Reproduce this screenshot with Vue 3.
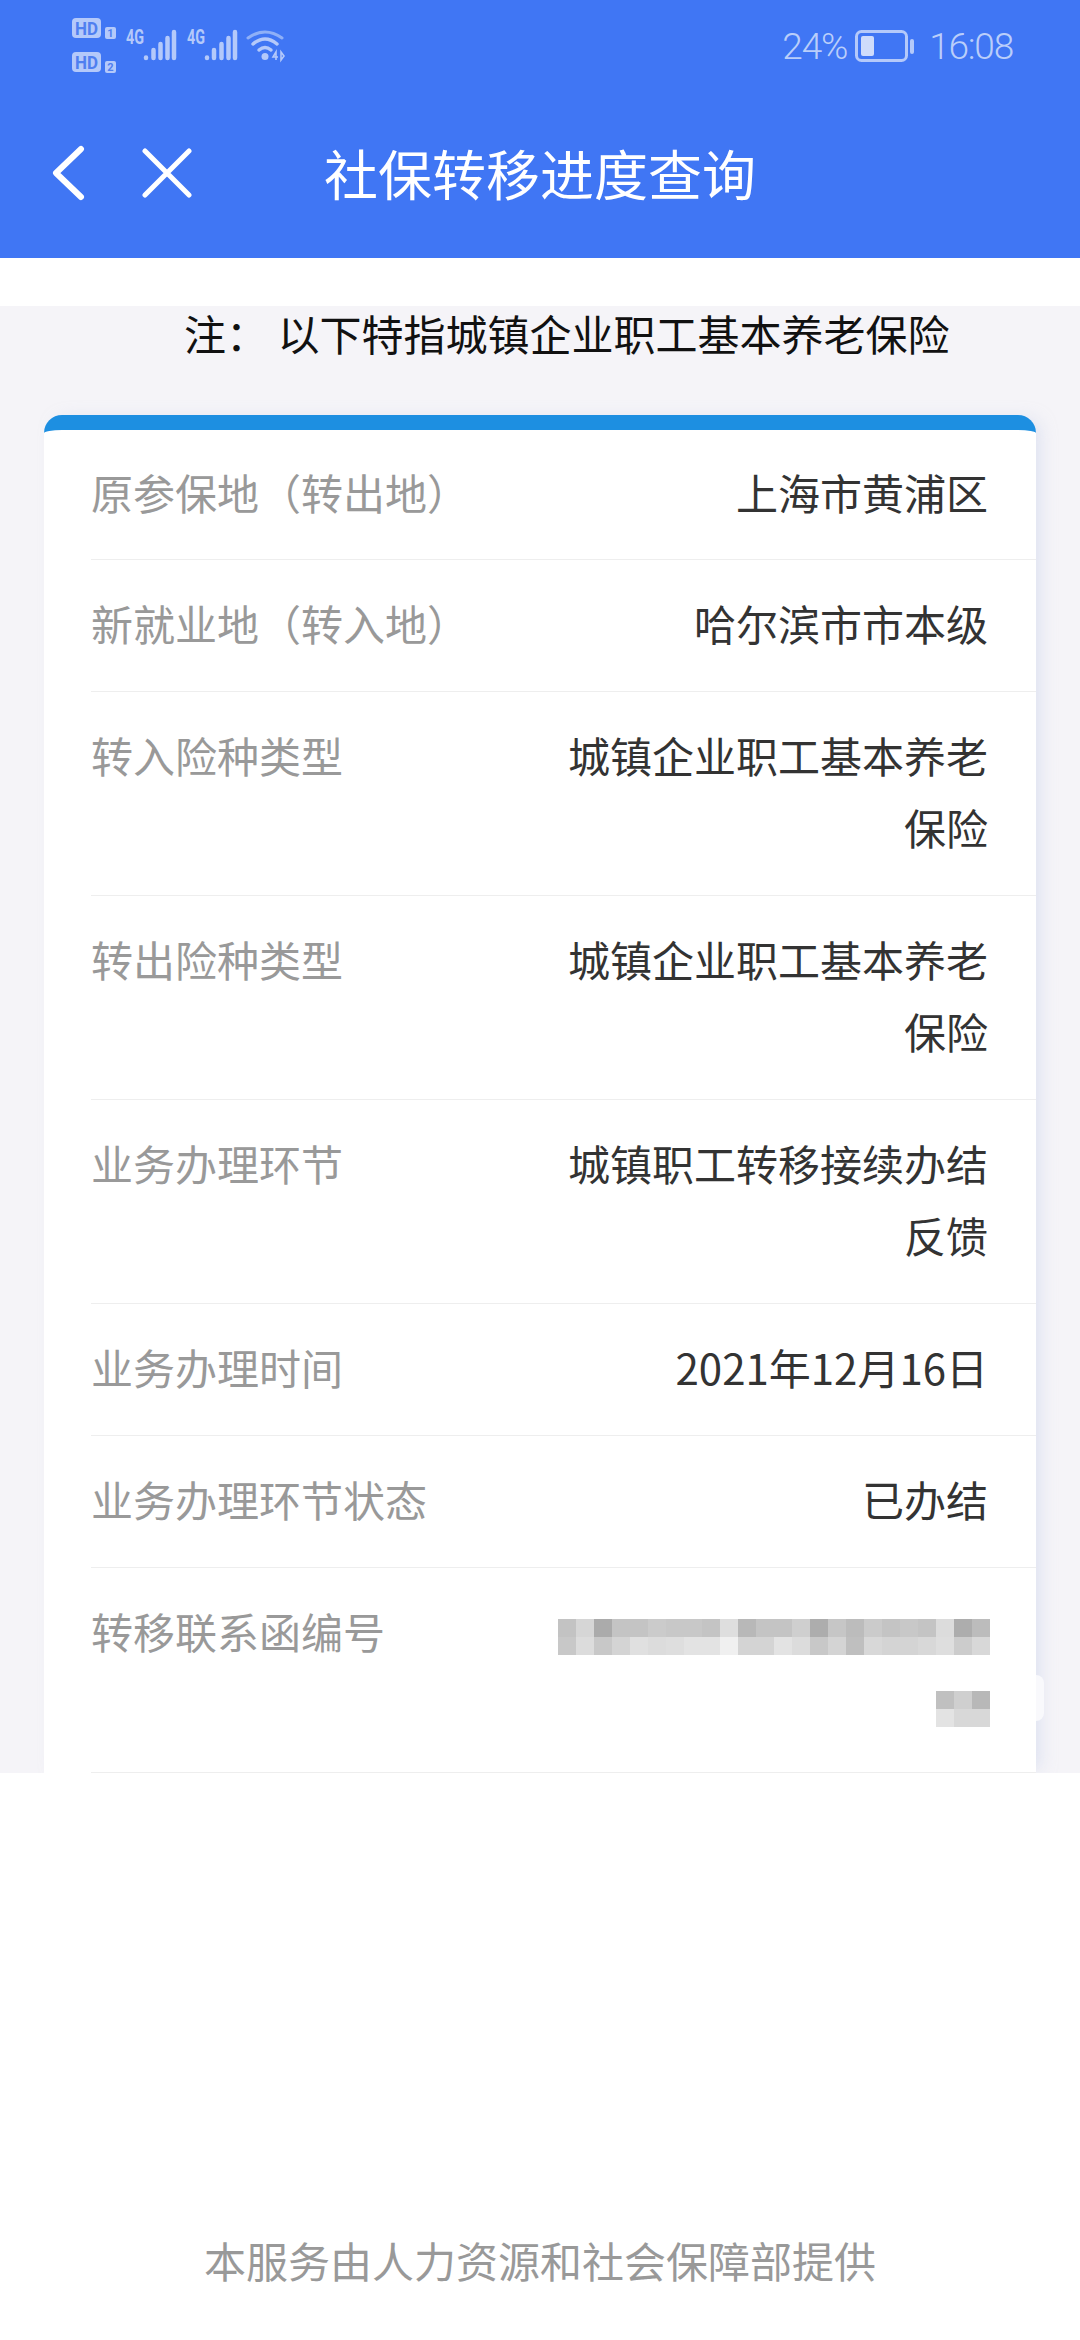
<script setup>
const rows = [
  { label: '原参保地（转出地）', value: '上海市黄浦区' },
  { label: '新就业地（转入地）', value: '哈尔滨市市本级' },
  { label: '转入险种类型', value: '城镇企业职工基本养老保险' },
  { label: '转出险种类型', value: '城镇企业职工基本养老保险' },
  { label: '业务办理环节', value: '城镇职工转移接续办结反馈' },
  { label: '业务办理时间', value: '2021年12月16日' },
  { label: '业务办理环节状态', value: '已办结' },
]
const mosaicLines = [
  [
    ['#c3c3c3','#d6d6d6','#ababab','#c4c4c4','#c4c4c4','#cbcbcb','#c8c8c8','#c8c8c8','#c4c4c4','#dedede','#b8b8b8','#c4c4c4','#c4c4c4','#cfcfcf','#adadad','#c6c6c6','#bcbcbc','#cbcbcb','#c4c4c4','#c8c8c8','#c4c4c4','#dcdcdc','#adadad','#bcbcbc'],
    ['#c8c8c8','#dcdcdc','#c8c8c8','#d4d4d4','#e0e0e0','#dcdcdc','#dedede','#e3e3e3','#e3e3e3','#f0f0f0','#d4d4d4','#d4d4d4','#e3e3e3','#dcdcdc','#c8c8c8','#d4d4d4','#bfbfbf','#d8d8d8','#d4d4d4','#d4d4d4','#d8d8d8','#dedede','#cccccc','#d8d8d8'],
  ],
  [
    ['#c0c0c0','#cfcfcf','#b8b8b8'],
    ['#e3e3e3','#d8d8d8','#d8d8d8'],
  ],
]
</script>

<template>
  <div class="page">
    <header class="header">
      <div class="status">
        <svg class="sb-icons" width="220" height="60" viewBox="0 0 220 60">
          <g fill="#b4c9fa">
            <rect x="0" y="0" width="29" height="20" rx="4" />
            <rect x="0" y="34" width="29" height="20" rx="4" />
            <rect x="33" y="9" width="11" height="12" rx="2" />
            <rect x="33" y="43" width="11" height="12" rx="2" />
          </g>
          <text x="3" y="16.5" class="hd" textLength="23" lengthAdjust="spacingAndGlyphs">HD</text>
          <text x="3" y="50.5" class="hd" textLength="23" lengthAdjust="spacingAndGlyphs">HD</text>
          <text x="38.5" y="19" class="hd-n">1</text>
          <text x="38.5" y="53" class="hd-n">2</text>
          <text x="54" y="26" class="net" textLength="18" lengthAdjust="spacingAndGlyphs">4G</text>
          <text x="115" y="26" class="net" textLength="18" lengthAdjust="spacingAndGlyphs">4G</text>
          <g stroke="#b4c9fa" stroke-width="4.5" stroke-linecap="round">
            <path d="M74 39.5v.5M81.500 32v8M88.500 26v14M95.500 20v20M102 14v26" />
            <path d="M135 39.500v.5M142 32v8M149.500 26v14M156.500 20v20M163 14v26" />
          </g>
          <g fill="none" stroke-linecap="round">
            <path d="M176 20q17-12 34 0" stroke="#8fb0f7" stroke-width="3" />
            <path d="M181 26q12-10 24 0" stroke="#b4c9fa" stroke-width="3.500" />
            <path d="M187 32q6-5 12 0" stroke="#b4c9fa" stroke-width="3.500" />
          </g>
          <circle cx="193" cy="38.500" r="3.500" fill="#b4c9fa" />
          <path d="M204 42v-8l-3 5h5M209 34v8l3-4z" fill="none" stroke="#b4c9fa" stroke-width="1.600" />
        </svg>
        <div class="status-right">
          <span class="sb-text">24%</span>
          <svg class="battery" width="60" height="32" viewBox="0 0 60 32">
            <rect x="1.500" y="1.500" width="50" height="29" rx="5" fill="none" stroke="#b4c9fa" stroke-width="3" />
            <rect x="6" y="6" width="13" height="20" rx="2" fill="#cfdcfb" />
            <rect x="55" y="9" width="4" height="15" rx="2" fill="#b4c9fa" />
          </svg>
          <span class="sb-text time">16:08</span>
        </div>
      </div>
      <nav class="nav">
        <div class="nav-icons">
          <svg width="34" height="56" viewBox="0 0 34 56">
            <path d="M29 4 4 28l25 24" fill="none" stroke="#fff" stroke-width="6" stroke-linecap="round" stroke-linejoin="round" />
          </svg>
          <svg width="50" height="50" viewBox="0 0 50 50">
            <path d="M3 3l44 44M47 3 3 47" fill="none" stroke="#fff" stroke-width="5" stroke-linecap="round" />
          </svg>
        </div>
        <h1 class="title">社保转移进度查询</h1>
      </nav>
    </header>

    <div class="gap"></div>

    <main class="content">
      <p class="note">注：&nbsp;以下特指城镇企业职工基本养老保险</p>
      <section class="card">
        <div v-for="row in rows" :key="row.label" class="row">
          <span class="label">{{ row.label }}</span>
          <span class="value">{{ row.value }}</span>
        </div>
        <div class="row row-last">
          <span class="label">转移联系函编号</span>
          <div class="mosaic">
            <div v-for="(line, i) in mosaicLines" :key="i" class="mosaic-line">
              <div v-for="(strip, j) in line" :key="j" class="mosaic-strip">
                <i v-for="(c, k) in strip" :key="k" class="cell" :style="{ background: c }"></i>
              </div>
            </div>
          </div>
        </div>
        <div class="smudge"></div>
      </section>
    </main>

    <footer class="footer">本服务由人力资源和社会保障部提供</footer>
  </div>
</template>

<style>
html, body { margin: 0; background: #fff; }
</style>

<style scoped>
.page {
  width: 1080px;
  height: 2340px;
  display: flex;
  flex-direction: column;
  overflow: hidden;
  background: #fff;
  font-family: "Noto Sans CJK SC", "Noto Sans", sans-serif;
}
.header { height: 258px; background: #4076f4; flex: none; }
.status {
  height: 90px;
  display: flex;
  justify-content: space-between;
  align-items: flex-start;
  padding: 18px 67px 0 72px;
  box-sizing: border-box;
}
.sb-icons { display: block; }
.hd { font: 700 19px "Roboto", sans-serif; fill: #4f7ff0; }
.hd-n { font: 700 11px "Roboto", sans-serif; fill: #4f7ff0; text-anchor: middle; }
.net { font: 700 20px "Roboto", sans-serif; fill: #b4c9fa; }
.status-right { display: flex; align-items: flex-start; gap: 8px; margin-top: 9px; }
.sb-text { font: 300 37px/40px "Roboto", sans-serif; letter-spacing: -1.2px; color: #bacefa; }
.time { margin-left: 6px; }
.battery { margin-top: 3px; }
.nav {
  height: 168px;
  display: grid;
  grid-template-columns: 1fr auto 1fr;
  align-items: center;
  padding-bottom: 2px;
  box-sizing: border-box;
}
.nav-icons { display: flex; align-items: center; gap: 56px; padding-left: 52px; }
.nav-icons svg { display: block; flex: none; }
.title {
  grid-column: 2;
  margin: 0;
  font-size: 54px;
  font-weight: 400;
  line-height: 76px;
  color: #fff;
}
.gap { height: 48px; flex: none; }
.content {
  height: 1467px;
  flex: none;
  background: #f5f4f8;
}
.note {
  margin: 0;
  height: 109px;
  padding-left: 184px;
  font-size: 42px;
  line-height: 53px;
  color: #111;
  box-sizing: border-box;
}
.card {
  position: relative;
  margin: 0 44px;
  height: 1358px;
  background: #fff;
  border-top: 15px solid #1d8fe1;
  border-radius: 18px 18px 0 0;
  box-shadow: 8px 0 16px -4px rgba(200, 210, 235, 0.5);
  clip-path: inset(-30px -30px 0 -30px);
  padding-left: 47px;
  box-sizing: border-box;
}
.row {
  display: grid;
  grid-template-columns: 1fr 420px;
  column-gap: 20px;
  padding: 27px 48px 32px 0;
  border-bottom: 1px solid #eeeeee;
  font-size: 42px;
  line-height: 72px;
}
.row:first-child { padding-top: 26px; padding-bottom: 31px; }
.row-last { height: 205px; box-sizing: border-box; }
.label { color: #999; white-space: nowrap; }
.value { color: #333; text-align: right; }
.mosaic {
  display: flex;
  flex-direction: column;
  align-items: flex-end;
  gap: 36px;
  padding-top: 24px;
  margin-left: -40px;
  margin-right: -2px;
}
.mosaic-line { display: flex; flex-direction: column; }
.mosaic-strip { display: flex; height: 18px; }
.cell { display: block; width: 18px; height: 18px; flex: none; }
.smudge {
  position: absolute;
  top: 1245px;
  right: -8px;
  width: 8px;
  height: 46px;
  border-radius: 0 8px 8px 0;
  background: #f9f9fc;
}
.footer {
  margin-top: auto;
  padding-bottom: 50px;
  text-align: center;
  font-size: 42px;
  line-height: 60px;
  color: #999;
}
</style>
